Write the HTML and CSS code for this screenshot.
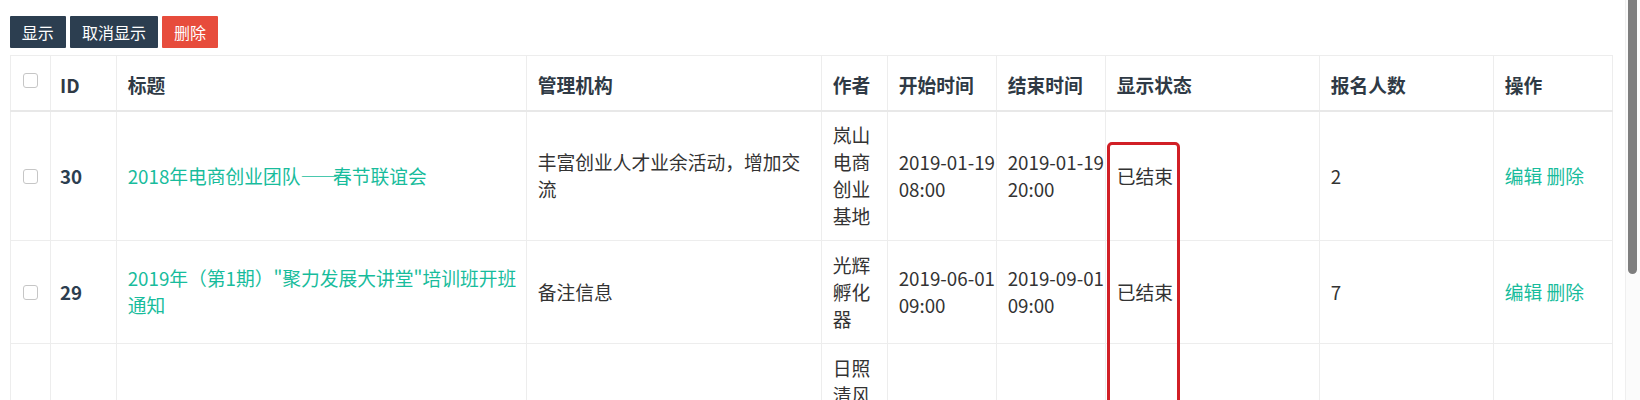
FILE: index.html
```html
<!DOCTYPE html>
<html lang="zh-CN">
<head>
<meta charset="utf-8">
<title>活动列表</title>
<link rel="stylesheet" href="styles.css">
</head>
<body>
<div class="page">
  <div class="toolbar">
    <button class="btn btn-dark">显示</button>
    <button class="btn btn-dark">取消显示</button>
    <button class="btn btn-red">删除</button>
  </div>
  <table class="grid">
    <colgroup>
      <col class="w-chk"><col class="w-id"><col class="w-title"><col class="w-org"><col class="w-author">
      <col class="w-date"><col class="w-date"><col class="w-status"><col class="w-num"><col class="w-op">
    </colgroup>
    <thead>
      <tr>
        <th class="c-chk c-chk-head"><input type="checkbox" class="chk"></th>
        <th class="h-id">ID</th>
        <th>标题</th>
        <th>管理机构</th>
        <th>作者</th>
        <th>开始时间</th>
        <th>结束时间</th>
        <th>显示状态</th>
        <th>报名人数</th>
        <th>操作</th>
      </tr>
    </thead>
    <tbody>
      <tr>
        <td class="c-chk"><input type="checkbox" class="chk"></td>
        <td class="c-id">30</td>
        <td class="c-title"><a class="link" href="#">2018年电商创业团队<span class="dash">——</span>春节联谊会</a></td>
        <td>丰富创业人才业余活动，增加交流</td>
        <td>岚山电商创业基地</td>
        <td><span class="nw">2019-01-19</span> <span class="nw">08:00</span></td>
        <td><span class="nw">2019-01-19</span> <span class="nw">20:00</span></td>
        <td>已结束</td>
        <td>2</td>
        <td><a class="link" href="#">编辑</a> <a class="link" href="#">删除</a></td>
      </tr>
      <tr>
        <td class="c-chk"><input type="checkbox" class="chk"></td>
        <td class="c-id">29</td>
        <td class="c-title"><a class="link" href="#">2019年（第1期）"聚力发展大讲堂"培训班开班通知</a></td>
        <td>备注信息</td>
        <td>光辉孵化器</td>
        <td><span class="nw">2019-06-01</span> <span class="nw">09:00</span></td>
        <td><span class="nw">2019-09-01</span> <span class="nw">09:00</span></td>
        <td>已结束</td>
        <td>7</td>
        <td><a class="link" href="#">编辑</a> <a class="link" href="#">删除</a></td>
      </tr>
      <tr class="row-cut">
        <td class="c-chk"></td>
        <td class="c-id"></td>
        <td class="c-title"></td>
        <td></td>
        <td class="c-top">日照清风</td>
        <td></td>
        <td></td>
        <td></td>
        <td></td>
        <td></td>
      </tr>
    </tbody>
  </table>
</div>
<div class="mark"></div>
<div class="scrolltrack"><div class="scrollthumb"></div></div>
</body>
</html>
```

FILE: styles.css
```css
html, body {
  margin: 0;
  padding: 0;
  background: #ffffff;
  overflow: hidden;
}

body {
  font-family: "Noto Sans CJK SC", "Noto Sans", sans-serif;
  color: #333333;
  position: relative;
  height: 400px;
}

.page {
  padding: 16px 0 0 10px;
}

.toolbar {
  display: flex;
  gap: 4.5px;
  margin-bottom: 7px;
}

.btn {
  font-family: inherit;
  font-size: 16px;
  line-height: 32px;
  height: 32px;
  padding: 0 11.8px;
  border: 0;
  border-radius: 1px;
  color: #ffffff;
  cursor: pointer;
}

.btn-dark {
  background: #2c3e50;
}

.btn-red {
  background: #e74c3c;
}

.grid {
  border-collapse: collapse;
  table-layout: fixed;
  width: 1602px;
  font-size: 18.76px;
  line-height: 26.8px;
  color: #333333;
}

.w-chk { width: 40px; }
.w-id { width: 66px; }
.w-title { width: 410px; }
.w-org { width: 295px; }
.w-author { width: 66px; }
.w-date { width: 109px; }
.w-status { width: 214px; }
.w-num { width: 174px; }
.w-op { width: 119px; }

.grid th,
.grid td {
  border: 1px solid #ededed;
  padding: 10.7px;
  text-align: left;
}

.grid th {
  font-weight: 700;
  color: #2f3a45;
  padding-top: 16px;
  padding-bottom: 11px;
  vertical-align: bottom;
  border-bottom: 2px solid #e8e8e8;
}

.grid td {
  vertical-align: middle;
}

.grid .h-id {
  padding-left: 9px;
}

.grid .c-title {
  padding-right: 4px;
}

.grid .c-top {
  vertical-align: top;
}

.grid .c-chk {
  text-align: center;
  line-height: 0;
  padding-left: 0;
  padding-right: 0;
}

.grid .c-chk-head {
  vertical-align: top;
  padding-top: 17px;
}

.chk {
  -webkit-appearance: none;
  appearance: none;
  display: inline-block;
  box-sizing: border-box;
  width: 15px;
  height: 15px;
  margin: 0;
  border: 1px solid #c6c6c6;
  border-radius: 3px;
  background: #ffffff;
  vertical-align: top;
}

.grid .c-id {
  font-weight: 700;
  color: #2c3e50;
  padding-left: 9px;
}

.link {
  color: #18bc9c;
  text-decoration: none;
}

.dash {
  letter-spacing: -5px;
}

.nw {
  white-space: nowrap;
}

.row-cut td {
  height: 80px;
}

.mark {
  position: absolute;
  left: 1107px;
  top: 142px;
  width: 73px;
  height: 320px;
  box-sizing: border-box;
  border: 3px solid #d11f26;
  border-radius: 5px;
}

.scrolltrack {
  position: fixed;
  top: 0;
  right: 0;
  width: 15px;
  height: 400px;
  box-sizing: border-box;
  border-left: 1px solid #efefef;
  background: #fbfbfb;
}

.scrollthumb {
  margin: 0 0 0 2px;
  width: 9px;
  height: 274px;
  background: #7e7e7e;
  border-radius: 0 0 4.5px 4.5px;
}
```
